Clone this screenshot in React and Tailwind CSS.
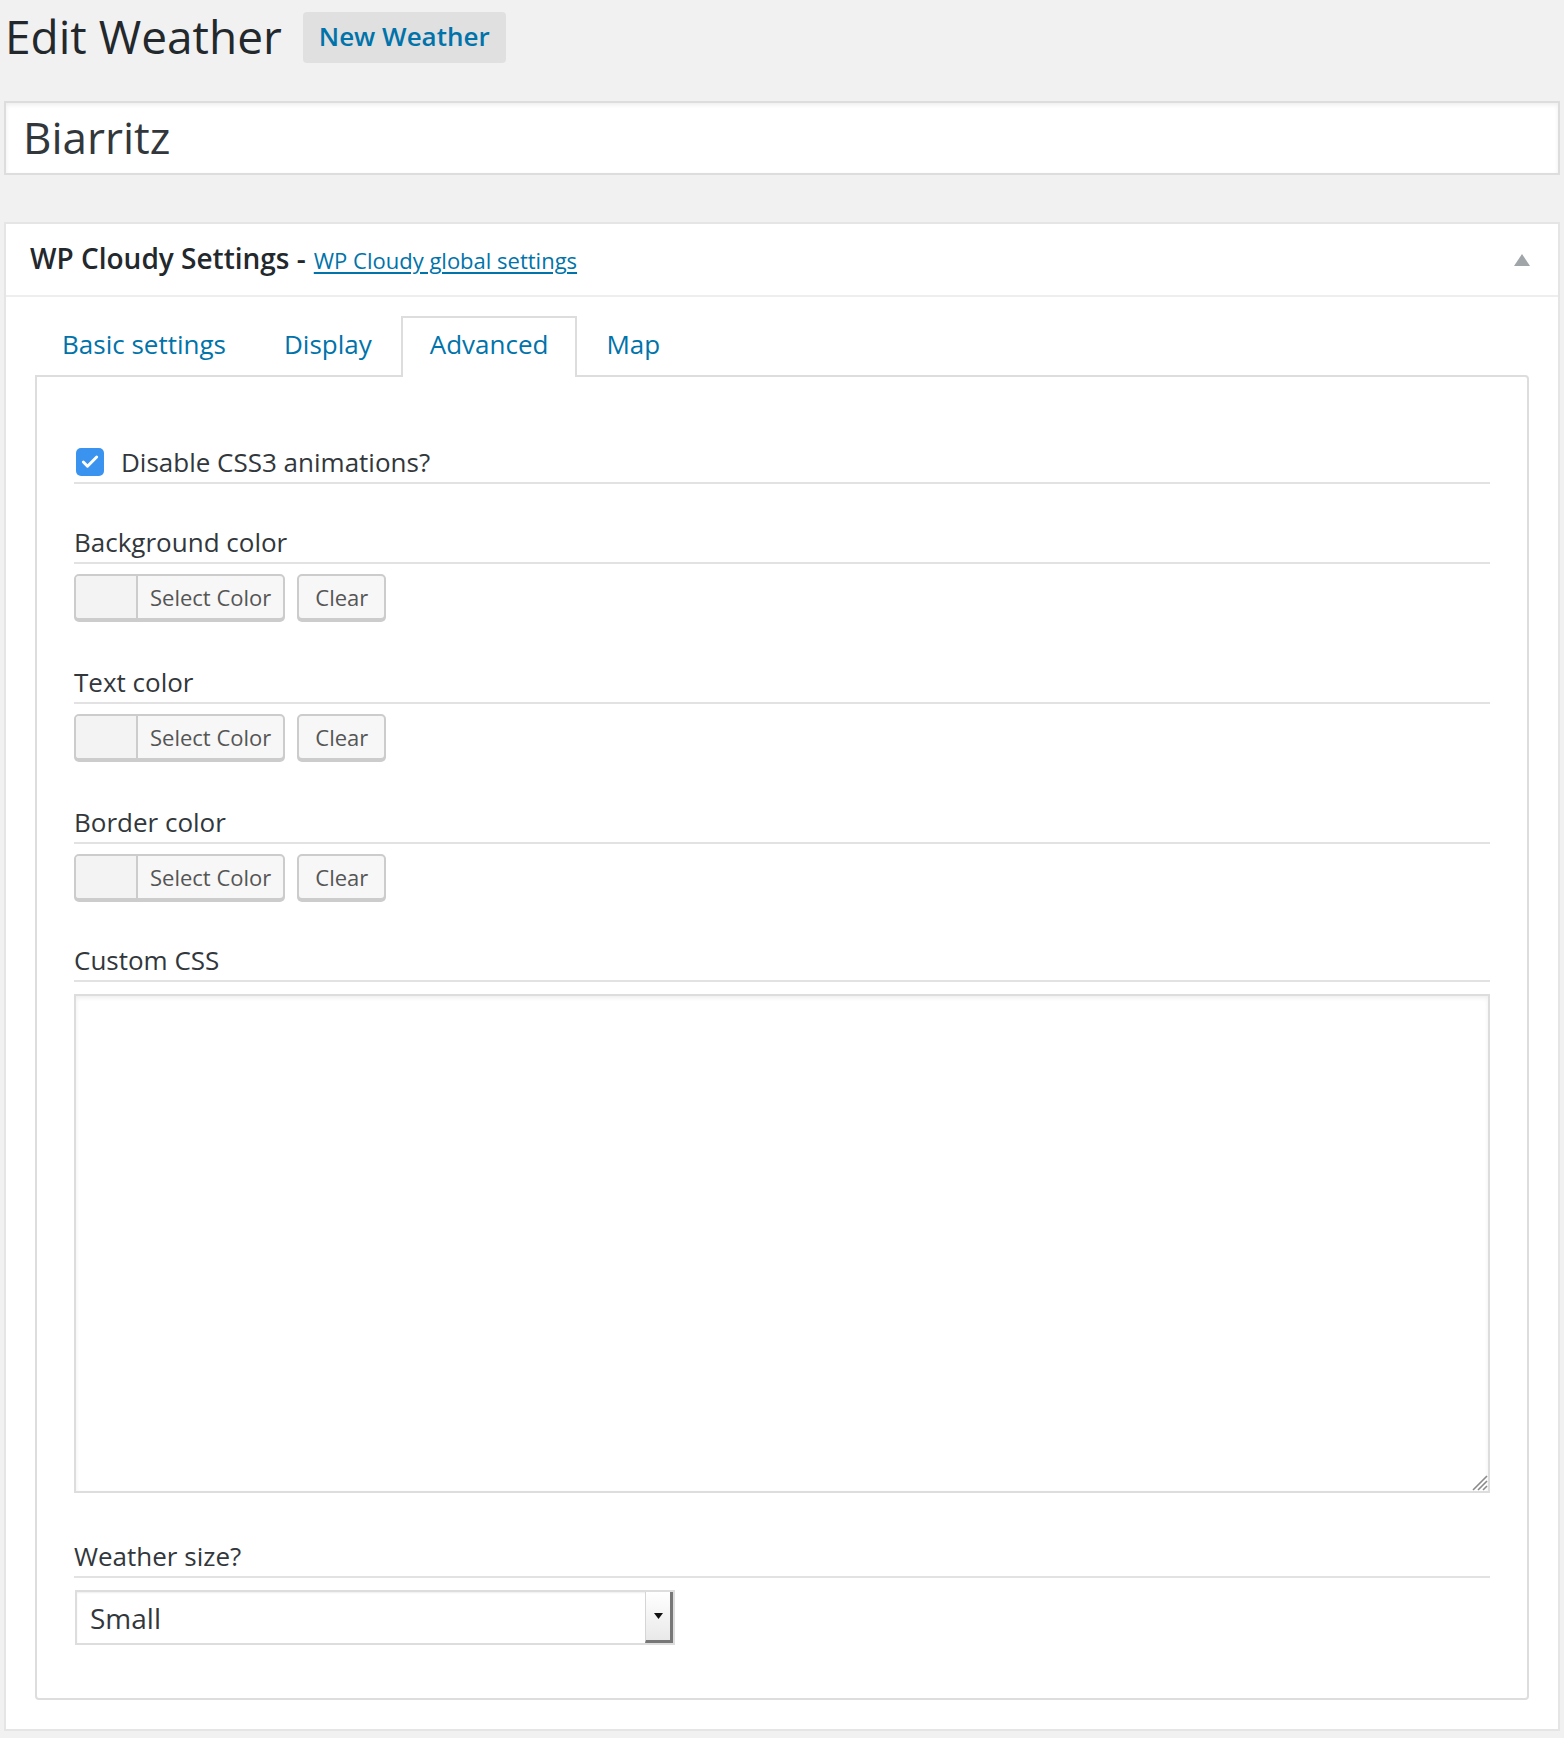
import { Check } from "lucide-react";

const tabs = [
  { label: "Basic settings", active: false },
  { label: "Display", active: false },
  { label: "Advanced", active: true },
  { label: "Map", active: false },
];

function FieldLabel({ children, className = "" }) {
  return (
    <div
      className={`flex h-[42px] items-center border-b-2 border-[#e2e2e2] text-[26px] leading-[34px] text-[#32373c] ${className}`}
    >
      {children}
    </div>
  );
}

function ColorPicker() {
  return (
    <div className="mt-[10px] flex items-center gap-[12px]">
      <div className="flex h-[46px] overflow-hidden rounded-[5px] border-2 border-[#cccccc] bg-[#f7f7f7] shadow-[0_2px_0_#cccccc]">
        <span className="w-[62px] border-r-2 border-[#cccccc] bg-[#f3f3f3]" />
        <span className="flex items-center px-[12px] text-[22px] text-[#555555]">
          Select Color
        </span>
      </div>

      <div className="flex h-[46px] items-center rounded-[5px] border-2 border-[#cccccc] bg-[#f7f7f7] px-[16px] text-[22px] text-[#555555] shadow-[0_2px_0_#cccccc]">
        Clear
      </div>
    </div>
  );
}

function ColorField({ label, className }) {
  return (
    <div className={className}>
      <FieldLabel>{label}</FieldLabel>
      <ColorPicker />
    </div>
  );
}

export default function App() {
  return (
    <div className="min-h-[1738px] bg-[#f1f1f1] px-[4px] pb-[6px] font-['Open_Sans',sans-serif] text-[#23282d]">
      <div className="flex h-[74px] items-center">
        <h1 className="mb-[3px] ml-[1px] text-[46px] font-normal leading-[60px] text-[#23282d]">
          Edit Weather
        </h1>

        <div className="ml-[21px] flex h-[51px] items-center rounded-[4px] bg-[#e0e0e0] px-[16px] pb-[2px] text-[26px] font-semibold text-[#0073aa]">
          New Weather
        </div>
      </div>

      <div className="mt-[27px] flex h-[74px] items-center border-2 border-[#dddddd] bg-white px-[17px] pb-[2px] text-[44px] text-[#32373c] shadow-[inset_0_2px_4px_rgba(0,0,0,0.07)]">
        Biarritz
      </div>

      <div className="mt-[47px] border-2 border-[#e5e5e5] bg-white">
        <div className="flex h-[73px] items-center justify-between border-b-2 border-[#eeeeee] pl-[24px] pr-[28px]">
          <div className="mb-[3px] flex items-baseline">
            <span className="text-[28px] font-semibold text-[#23282d]">
              WP Cloudy Settings -
            </span>
            <a
              href="#"
              className="ml-[8px] text-[22px] text-[#0073aa] underline underline-offset-[3px]"
            >
              WP Cloudy global settings
            </a>
          </div>

          <svg width="16" height="12" viewBox="0 0 16 12">
            <path d="M8 0 L16 12 L0 12 Z" fill="#a0a5aa" />
          </svg>
        </div>

        <div className="px-[29px] pb-[29px] pt-[19px]">
          <div className="relative z-10 -mb-[2px] -ml-[2px] flex items-end">
            {tabs.map((tab) => (
              <div
                key={tab.label}
                className={`flex h-[61px] items-center border-2 border-b-0 px-[27px] pb-[6px] text-[26px] text-[#0073aa] ${
                  tab.active
                    ? "border-[#dddddd] bg-white"
                    : "border-transparent"
                }`}
              >
                {tab.label}
              </div>
            ))}
          </div>

          <div className="rounded-[4px] rounded-tl-none border-2 border-[#dddddd] px-[37px] pb-[53px] pt-[65px]">
            <div className="flex h-[42px] items-center border-b-2 border-[#e2e2e2] pb-[1px]">
              <span className="ml-[2px] flex h-[28px] w-[28px] items-center justify-center rounded-[5px] bg-[#3b93f0]">
                <Check size={20} strokeWidth={3.5} className="text-white" />
              </span>
              <span className="ml-[17px] text-[26px] leading-[34px] text-[#32373c]">
                Disable CSS3 animations?
              </span>
            </div>

            <ColorField label="Background color" className="mt-[38px]" />
            <ColorField label="Text color" className="mt-[42px]" />
            <ColorField label="Border color" className="mt-[42px]" />

            <div className="mt-[40px]">
              <FieldLabel>Custom CSS</FieldLabel>

              <div className="relative mt-[12px] h-[499px] border-2 border-[#dddddd] bg-white shadow-[inset_0_2px_4px_rgba(0,0,0,0.07)]">
                <svg
                  className="absolute bottom-0 right-0"
                  width="20"
                  height="20"
                  viewBox="0 0 20 20"
                >
                  <path
                    d="M19 5 L5 19 M19 10 L10 19 M19 15 L15 19"
                    stroke="#8a8a8a"
                    strokeWidth="1.6"
                  />
                </svg>
              </div>
            </div>

            <div className="mt-[43px]">
              <FieldLabel>Weather size?</FieldLabel>

              <div className="ml-[1px] mt-[12px] flex h-[55px] w-[600px] border-2 border-[#dddddd] bg-white shadow-[inset_0_1px_2px_rgba(0,0,0,0.07)]">
                <span className="flex flex-1 items-center px-[13px] text-[28px] text-[#32373c]">
                  Small
                </span>
                <span className="flex w-[28px] items-center justify-center border-b-[3px] border-l border-r-[3px] border-b-[#777777] border-l-[#d5d5d5] border-r-[#777777] bg-gradient-to-b from-white to-[#e9e9e9]">
                  <svg width="9" height="6" viewBox="0 0 9 6">
                    <path d="M0 0 L9 0 L4.5 6 Z" fill="#111111" />
                  </svg>
                </span>
              </div>
            </div>
          </div>
        </div>
      </div>
    </div>
  );
}
